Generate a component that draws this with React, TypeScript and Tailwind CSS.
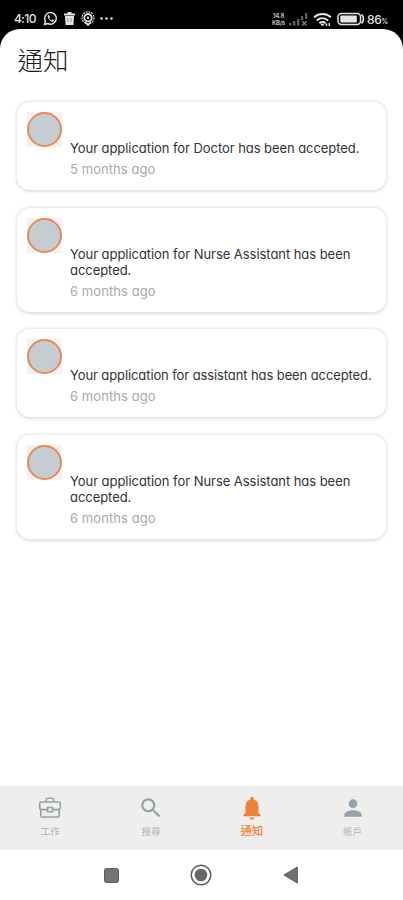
import React from "react";

const items = [
  { lines: ["Your application for Doctor has been accepted."], time: "5 months ago", tracking: "tracking-[-0.06px]" },
  { lines: ["Your application for Nurse Assistant has been", "accepted."], time: "6 months ago", tracking: "tracking-[-0.05px]" },
  { lines: ["Your application for assistant has been accepted."], time: "6 months ago", tracking: "tracking-[-0.1px]" },
  { lines: ["Your application for Nurse Assistant has been", "accepted."], time: "6 months ago", tracking: "tracking-[-0.05px]" },
];

function StatusBar() {
  return (
    <div className="flex h-[29px] items-start bg-black pt-[10px] pl-[14px] text-[#e4e4e4]">
      <span className="w-[29px] text-[12px] leading-[18px] font-medium tracking-[-0.6px]">4:10</span>
      <svg className="mt-[1px] h-[15px] w-[15px]" viewBox="0 0 24 24" fill="none" stroke="currentColor" strokeWidth="2.3">
        <path d="M2.5 21.5 4 16.5A9.3 9.3 0 1 1 7.7 20Z" />
        <path d="M8.3 6.5c-2.4 2 1.4 9.8 6.7 10.5 2 .2 3-1.4 2.5-2.4l-2.6-1.3-1.2 1.3c-1.7-.6-3-2-3.7-3.6l1.1-1.4-1.3-2.9Z" fill="currentColor" stroke="none" />
      </svg>
      <svg className="mt-[2px] ml-[6px] h-[13px] w-[11px]" viewBox="0 0 11 13" fill="currentColor">
        <path d="M0 1.5h3.5V0h4v1.5H11v2H0ZM1 4h9l-.5 9h-8Z" />
        <path d="M4 6v4M7 6v4" stroke="#777" strokeWidth=".7" />
      </svg>
      <svg className="mt-[1px] ml-[6px] h-[15px] w-[14px]" viewBox="0 0 14 15" fill="none" stroke="currentColor">
        <circle cx="7" cy="6.7" r="3.7" strokeWidth="1.8" />
        <circle cx="7" cy="6.7" r="6" strokeWidth="1.1" strokeDasharray="2 .8" />
        <circle cx="7" cy="6.7" r="1.2" fill="currentColor" stroke="none" />
        <path d="m4 11 3 3 3-3" strokeWidth="1.6" />
      </svg>
      <svg className="mt-[7px] ml-[5px] h-[3px] w-[13px]" viewBox="0 0 13 3" fill="currentColor">
        <circle cx="1.5" cy="1.5" r="1.2" /><circle cx="6.5" cy="1.5" r="1.2" /><circle cx="11.5" cy="1.5" r="1.2" />
      </svg>
      <div className="mt-[2px] ml-auto w-[17px] text-[6px] leading-[7px] font-bold tracking-[-0.3px] text-[#bbb]">
        <div className="pl-[1px]">14.8</div>
        <div>KB/s</div>
      </div>
      <svg className="mt-[3px] h-[13px] w-[19px]" viewBox="0 0 19 13" fill="#5f5f5f">
        <path d="M0 10h2.4v2.5H0ZM4 8h2.4v4.5H4ZM8 6h2.4v6.5H8ZM12 3h2.2v4H12ZM16 0h2.2v6H16Z" />
        <path d="m13 8 4.6 4.6M17.6 8 13 12.6" stroke="#8a8a8a" strokeWidth="1.2" />
      </svg>
      <svg className="mt-[3px] ml-[5px] h-[14px] w-[19px]" viewBox="0 0 19 14" fill="none" stroke="currentColor" strokeWidth="2">
        <path d="M1 4.2c5-4.2 12-4.2 17 0M3.8 7.4c3.5-3 8-3 11.4 0M6.4 10.2c2-1.6 4.2-1.6 6.2 0" />
        <path d="m7.2 10.8 2.3 2.4 2.3-2.4Z" fill="currentColor" stroke="none" />
        <path d="M13.5 10.5v2.5M16.3 10v3" strokeWidth="1.5" />
      </svg>
      <svg className="mt-[2px] ml-[5px] h-[14px] w-[28px]" viewBox="0 0 28 14" fill="none" stroke="currentColor">
        <rect x="1" y="1.4" width="22.5" height="11" rx="3.5" strokeWidth="1.5" />
        <rect x="3.3" y="3.4" width="16.5" height="7.2" rx="1" fill="currentColor" stroke="none" />
        <path d="M24.5 2.4c2.6 2 2.6 7 0 9" strokeWidth="1.7" />
      </svg>
      <span className="ml-[2px] w-[36px] text-[12px] leading-[19px] font-medium tracking-[-0.4px]">
        86<span className="text-[7px]">%</span>
      </span>
    </div>
  );
}

function Card({ lines, time, tracking }: { lines: string[]; time: string; tracking: string }) {
  return (
    <article
      className={`flex rounded-[13px] bg-white pt-[10px] pl-[10px] shadow-[0_0.5px_3px_1px_rgba(85,80,65,0.17)] ${lines.length > 1 ? "h-[104px]" : "h-[88px]"}`}
    >
      <div className="h-[35px] w-[35px] shrink-0 bg-[#f5f1f0]">
        <div className="h-[35px] w-[35px] rounded-full border-2 border-[#ec8954] bg-[#c4ced2]" />
      </div>
      <div className="pt-[28px] pl-[8px]">
        {lines.map((line) => (
          <p key={line} className={`text-[13px] leading-[16px] whitespace-nowrap text-[#333] ${tracking}`}>{line}</p>
        ))}
        <p className="mt-[5px] text-[13px] leading-[16px] tracking-[0.07px] whitespace-nowrap text-[#a2acb0]">{time}</p>
      </div>
    </article>
  );
}

function Tab({ label, active, children }: { label: string; active?: boolean; children: React.ReactNode }) {
  return (
    <div className={`flex flex-1 flex-col items-center pt-[9px] ${active ? "text-[#ee8239]" : "text-[#94a3aa]"}`}>
      <svg className="h-[26px] w-[26px]" viewBox="0 0 24 24" fill="currentColor">{children}</svg>
      <span className={`mt-[3px] leading-[15px] ${active ? "text-[11.5px] font-medium" : "text-[9.5px] text-[#b2b4b5]"}`}>{label}</span>
    </div>
  );
}

export default function App() {
  return (
    <div className="flex h-[900px] w-[403px] flex-col overflow-hidden bg-black font-['Inter','Noto_Sans_CJK_TC',sans-serif] [font-feature-settings:'cv11']">
      <StatusBar />
      <main className="flex-1 rounded-t-[20px] bg-white px-[17px]">
        <h1 className="pt-[13px] pl-[0.5px] text-[25.5px] leading-[38px] font-light text-[#181818]">通知</h1>
        <section className="mt-[22px] flex flex-col gap-[17.6px]">
          {items.map((item, i) => <Card key={i} {...item} />)}
        </section>
      </main>
      <nav className="flex h-[64px] bg-[#f0eeed]">
        <Tab label="工作">
          <path d="M8.5 6V4.5a1.5 1.5 0 0 1 1.5-1.5h4a1.5 1.5 0 0 1 1.5 1.5V6M4 6.5h16a1.5 1.5 0 0 1 1.5 1.5v3.5q0 2-2 2H14.5M9.5 13.5h-5q-2 0-2-2V8A1.5 1.5 0 0 1 4 6.5M3.5 13.5V19a1.3 1.3 0 0 0 1.3 1.3h14.4a1.3 1.3 0 0 0 1.3-1.3v-5.5M9.7 11.5h4.6v4H9.7Z" fill="none" stroke="currentColor" strokeWidth="1.5" />
        </Tab>
        <Tab label="搜尋">
          <path d="M15.5 14h-.79l-.28-.27A6.471 6.471 0 0 0 16 9.5 6.5 6.5 0 1 0 9.5 16c1.61 0 3.09-.59 4.23-1.57l.27.28v.79l5 4.99L20.49 19l-4.99-5zm-6 0C7.01 14 5 11.99 5 9.5S7.01 5 9.5 5 14 7.01 14 9.5 11.99 14 9.5 14z" />
        </Tab>
        <Tab label="通知" active>
          <path d="M12 22.8c1.1 0 2-.9 2-2h-4c0 1.1.9 2 2 2zm6-6.3v-5.8c0-3.3-1.5-5.9-4.4-6.6v-.9a1.6 1.6 0 0 0-3.2 0v.9c-2.9.7-4.4 3.3-4.4 6.6v5.8l-2 2v1.2h16v-1.2z" />
        </Tab>
        <Tab label="帳戶">
          <path d="M12 12c2.21 0 4-1.79 4-4s-1.79-4-4-4-4 1.79-4 4 1.79 4 4 4zm0 2c-2.67 0-8 1.34-8 4v2h16v-2c0-2.66-5.33-4-8-4z" />
        </Tab>
      </nav>
      <div className="flex h-[50px] items-center bg-white pl-[104px]">
        <div className="h-[15px] w-[15px] rounded-[2.5px] border border-[#5c5c5c] bg-[#747474]" />
        <svg className="ml-[71px] h-[22px] w-[22px]" viewBox="0 0 22 22">
          <circle cx="11" cy="11" r="9.8" fill="none" stroke="#5e5e5e" strokeWidth="1.5" />
          <circle cx="11" cy="11" r="6.3" fill="#666" />
        </svg>
        <svg className="ml-[71px] h-[18px] w-[16px]" viewBox="0 0 16 18">
          <path d="M1 9 14.3 1v16Z" fill="#707070" stroke="#5b5b5b" strokeLinejoin="round" />
        </svg>
      </div>
    </div>
  );
}
